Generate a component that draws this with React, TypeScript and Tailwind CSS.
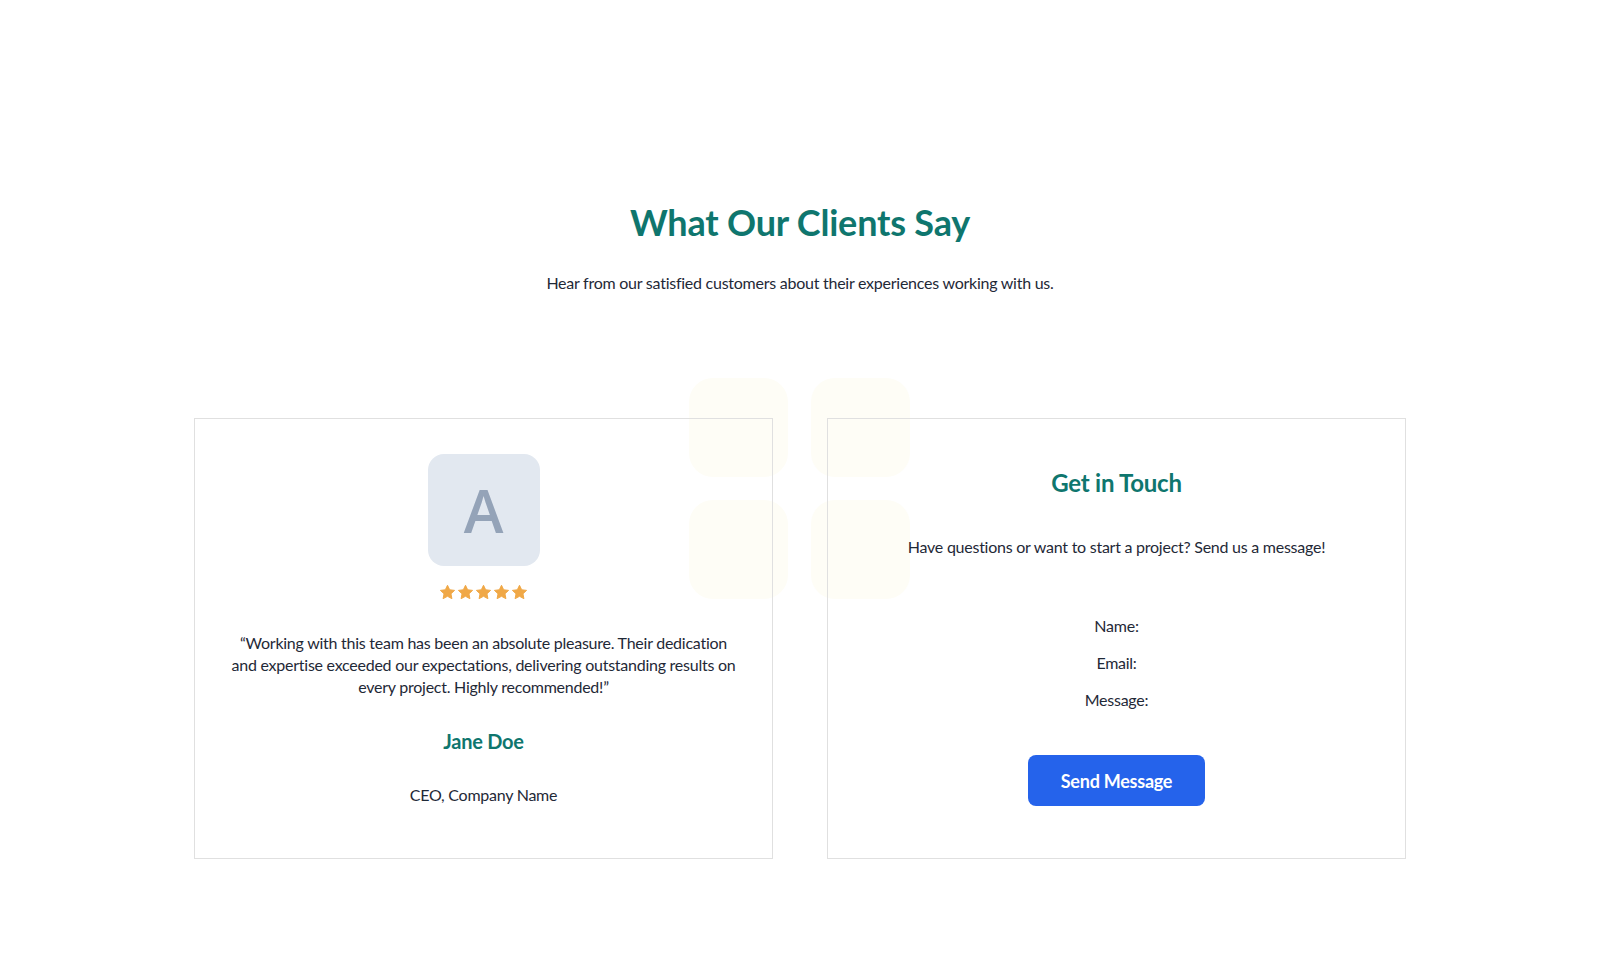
import React from "react";

// ─── Bits ─────────────────────────────────────────────────────────────────────

function Star() {
  return (
    <svg viewBox="0 0 24 24" className="h-[17px] w-[17px]" fill="#f0a847">
      <path
        d="M12 1.8l3.05 6.35 6.95.86-5.1 4.8 1.3 6.9L12 17.35 5.8 20.71l1.3-6.9-5.1-4.8 6.95-.86z"
        stroke="#f0a847"
        strokeWidth="1.4"
        strokeLinejoin="round"
      />
    </svg>
  );
}

const font = { fontFamily: "Lato, 'Noto Sans', sans-serif" };

// ─── Page ─────────────────────────────────────────────────────────────────────

export default function App() {
  return (
    <div
      className="min-h-screen bg-white pt-[202px] tracking-[-0.25px] text-[#1f2937]"
      style={font}
    >
      <h2 className="text-center text-[36px] font-bold leading-10 tracking-[-0.2px] text-[#0f766e]">
        What Our Clients Say
      </h2>
      <p className="mt-[29px] text-center text-base leading-6">
        Hear from our satisfied customers about their experiences working with us.
      </p>

      <div className="relative mx-auto mt-[123px] grid w-[1212px] grid-cols-2 gap-[54px]">
        {/* Decorative squares */}
        <div className="absolute left-[495px] top-[-40px] grid grid-cols-2 gap-[23px]">
          <div className="h-[99px] w-[99px] rounded-3xl bg-[#fefdf6]" />
          <div className="h-[99px] w-[99px] rounded-3xl bg-[#fefdf6]" />
          <div className="h-[99px] w-[99px] rounded-3xl bg-[#fefdf6]" />
          <div className="h-[99px] w-[99px] rounded-3xl bg-[#fefdf6]" />
        </div>

        {/* Testimonial */}
        <div className="relative flex h-[441px] flex-col items-center border border-[#e0e0e0] pt-[35px]">
          <div className="flex h-28 w-28 items-center justify-center rounded-2xl bg-[#e2e8f0]">
            <span
              className="text-[60px] font-semibold leading-none text-[#94a3b8]"
              style={{ fontFamily: "'Open Sans', sans-serif" }}
            >
              A
            </span>
          </div>
          <div className="mt-[18px] flex gap-px">
            <Star />
            <Star />
            <Star />
            <Star />
            <Star />
          </div>
          <p className="mt-[31px] w-[530px] text-center text-base leading-[22px]">
            “Working with this team has been an absolute pleasure. Their dedication
            <br />
            and expertise exceeded our expectations, delivering outstanding results on
            <br />
            every project. Highly recommended!”
          </p>
          <h3 className="mt-[29px] text-xl font-bold leading-7 text-[#0f766e]">Jane Doe</h3>
          <p className="mt-[28px] text-base leading-6">CEO, Company Name</p>
        </div>

        {/* Contact */}
        <div className="relative flex h-[441px] flex-col items-center border border-[#e0e0e0] pt-[48px]">
          <h3 className="text-2xl font-bold leading-8 text-[#0f766e]">Get in Touch</h3>
          <p className="mt-[36px] text-base leading-6">
            Have questions or want to start a project? Send us a message!
          </p>
          <form className="mt-[55px] flex flex-col items-center gap-[13px]">
            <label className="text-base leading-6">Name:</label>
            <label className="text-base leading-6">Email:</label>
            <label className="text-base leading-6">Message:</label>
            <button
              type="button"
              className="mt-[30px] h-[51px] w-[177px] rounded-lg bg-[#2563eb] text-lg font-bold text-white"
            >
              Send Message
            </button>
          </form>
        </div>
      </div>
    </div>
  );
}
